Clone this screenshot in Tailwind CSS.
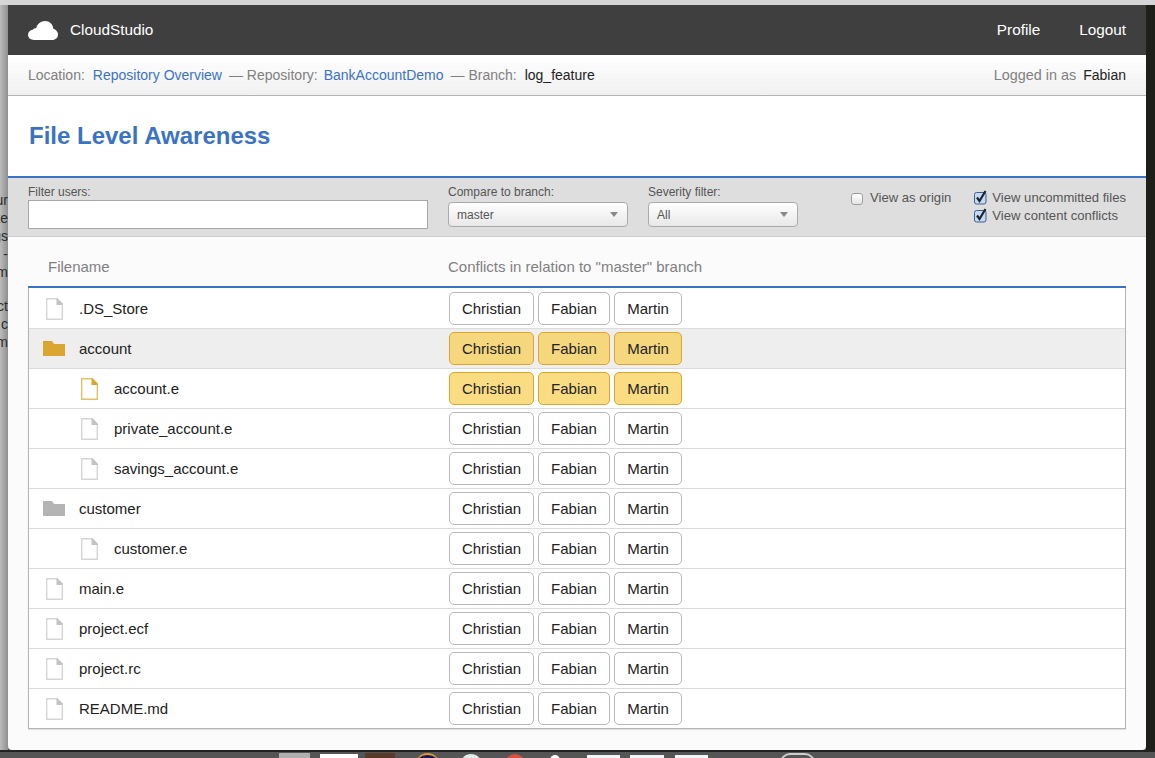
<!DOCTYPE html>
<html lang="en">
  <head>
    <meta charset="UTF-8" />
    <title>CloudStudio - File Level Awareness</title>
    <script src="https://cdn.jsdelivr.net/npm/@tailwindcss/browser@4"></script>
  </head>
  <body class="w-[1155px] h-[758px] overflow-hidden bg-[#55554f] font-['Liberation_Sans',Arial,sans-serif] text-[14px]">
    <!-- Desktop behind the window -->
    <div class="h-[5px] bg-[#d6d6d6]"></div>
    <div class="flex h-[745px]">
      <div class="w-[8px] overflow-hidden flex flex-col items-end pt-[186px] bg-gradient-to-r from-[#bcbcbc] to-[#8f8f8f] text-[#2c2c2c] leading-[18px] whitespace-nowrap">
        <span class="h-[18px]">ur</span>
        <span class="h-[18px]">te</span>
        <span class="h-[18px]">gs</span>
        <span class="h-[18px]">-</span>
        <span class="h-[18px]">m</span>
        <span class="h-[16px]"></span>
        <span class="h-[18px]">ct</span>
        <span class="h-[18px]">c</span>
        <span class="h-[18px]">m</span>
      </div>

      <!-- Window -->
      <div class="w-[1138px] flex flex-col bg-[#fbfbfb] rounded-b-[4px] overflow-hidden">
        <header class="h-[50px] shrink-0 bg-[#3f3f3f] flex items-center justify-between px-[20px] text-white text-[15.3px]">
          <div class="flex items-center">
            <svg width="30" height="19" viewBox="0 0 30 19" class="mr-[12px]">
              <path fill="#fff" d="M6 19C2.600 19 0 16.800 0 13.800 0 11.200 2 9.200 4.700 8.800 5.400 7.600 6.700 7 8 7.200 9.400 3 12.800 0 17 0c4.600 0 8 3.300 8.300 7.700 2.800.8 4.700 3 4.700 5.800C30 16.700 27.500 19 24.300 19Z" />
            </svg>
            <span>CloudStudio</span>
          </div>
          <nav class="flex gap-[39px]">
            <a>Profile</a>
            <a>Logout</a>
          </nav>
        </header>

        <div class="h-[41px] shrink-0 border-b border-[#b4b4b4] bg-gradient-to-b from-white to-[#f0f0f0] flex items-center justify-between px-[20px] text-[#808080]">
          <div class="flex">
            <span>Location:</span>
            <a class="ml-[8px] text-[#3b73c4]">Repository Overview</a>
            <span class="ml-[7px]">— Repository:</span>
            <a class="ml-[6px] text-[#3b73c4]">BankAccountDemo</a>
            <span class="ml-[7px]">— Branch:</span>
            <span class="ml-[8px] text-[#222]">log_feature</span>
          </div>
          <div class="flex items-baseline mt-[1px]">
            <span class="text-[14.4px]">Logged in as</span>
            <span class="ml-[7px] text-[#222]">Fabian</span>
          </div>
        </div>

        <div class="h-[80px] shrink-0 bg-white flex items-center pl-[21px]">
          <h1 class="text-[24px] font-bold text-[#3b73c4]">File Level Awareness</h1>
        </div>

        <!-- Filters -->
        <div class="h-[61px] shrink-0 border-t-2 border-b border-t-[#3b73c4] border-b-[#cfcfcf] bg-[#dedede] flex px-[20px] text-[12px] text-[#555]">
          <div class="w-[400px] mt-[6px]">
            <label class="block leading-[16px]">Filter users:</label>
            <input type="text" class="block w-[400px] h-[29px] bg-white border border-[#a8a8a8]" />
          </div>
          <div class="w-[180px] ml-[20px] mt-[6px]">
            <label class="block leading-[16px]">Compare to branch:</label>
            <div class="flex items-center justify-between h-[25px] mt-[2px] pl-[8px] pr-[9px] rounded-[4px] border border-[#aaa] bg-gradient-to-b from-white to-[#e8e8e8]">
              <span>master</span>
              <span class="w-0 h-0 border-x-[4px] border-x-transparent border-t-[5px] border-t-[#888]"></span>
            </div>
          </div>
          <div class="w-[150px] ml-[20px] mt-[6px]">
            <label class="block leading-[16px]">Severity filter:</label>
            <div class="flex items-center justify-between h-[25px] mt-[2px] pl-[8px] pr-[9px] rounded-[4px] border border-[#aaa] bg-gradient-to-b from-white to-[#e8e8e8]">
              <span>All</span>
              <span class="w-0 h-0 border-x-[4px] border-x-transparent border-t-[5px] border-t-[#888]"></span>
            </div>
          </div>
          <div class="ml-auto flex mt-[11px] gap-[23px] text-[13.1px]">
            <div class="flex items-start leading-[18px] h-[18px]">
              <span class="w-[12px] h-[12px] mt-[4px] mr-[7px] rounded-[3px] border border-[#a0a0a0] bg-gradient-to-b from-white to-[#e4e4e4]"></span>
              <span>View as origin</span>
            </div>
            <div class="leading-[18px]">
              <div class="flex items-start">
                <svg width="13" height="15" viewBox="0 0 13 15" class="mr-[5px] mt-[1px]">
                  <rect x="0.500" y="2.500" width="11.500" height="11.500" rx="2" fill="#c6d9f2" stroke="#3c5f90" />
                  <path d="M3 7.500 5.500 11 11.500 1" fill="none" stroke="#1c2430" stroke-width="2.200" />
                </svg>
                <span>View uncommitted files</span>
              </div>
              <div class="flex items-start">
                <svg width="13" height="15" viewBox="0 0 13 15" class="mr-[5px] mt-[1px]">
                  <rect x="0.500" y="2.500" width="11.500" height="11.500" rx="2" fill="#c6d9f2" stroke="#3c5f90" />
                  <path d="M3 7.500 5.500 11 11.500 1" fill="none" stroke="#1c2430" stroke-width="2.200" />
                </svg>
                <span>View content conflicts</span>
              </div>
            </div>
          </div>
        </div>

        <!-- File table -->
        <div class="px-[20px]">
          <div class="flex h-[51px] pt-[21px] leading-[18px] text-[15px] text-[#808080] border-b-2 border-[#3b73c4]">
            <div class="w-[420px] pl-[20px]">Filename</div>
            <div>Conflicts in relation to "master" branch</div>
          </div>
          <div id="rows" class="pt-[1px] bg-white border-x border-b border-[#b4b4b4] shadow-[0_1px_1px_rgba(0,0,0,0.1)] text-[15px] text-[#222]"></div>
        </div>
      </div>

      <div class="w-[9px] bg-[#1f1f1a]"></div>
    </div>

    <!-- Dock peeking out under the window -->
    <div class="h-[8px] overflow-hidden border-t-2 border-[#222] bg-[#555] flex pl-[279px]">
      <span class="mt-[1px] w-[31px] h-[6px] bg-[#b0b0b0]"></span>
      <span class="mt-[2px] ml-[10px] w-[38px] h-[6px] bg-white"></span>
      <span class="mt-[1px] ml-[7px] w-[30px] h-[6px] bg-[#5a3a28]"></span>
      <span class="mt-[1px] ml-[20px] w-[25px] h-[25px] rounded-full bg-[#1e1a5a] border-t-2 border-[#d99a30]"></span>
      <span class="mt-[2px] ml-[20px] w-[22px] h-[22px] rounded-full bg-[#dfeeea]"></span>
      <span class="mt-[2px] ml-[23px] w-[20px] h-[20px] rounded-full bg-[#d9503f]"></span>
      <span class="mt-[3px] ml-[25px] w-[10px] h-[10px] rounded-full bg-white"></span>
      <span class="mt-[3px] ml-[27px] w-[33px] h-[6px] bg-[#f2f6fa]"></span>
      <span class="mt-[3px] ml-[10px] w-[34px] h-[6px] bg-[#f2f6fa]"></span>
      <span class="mt-[3px] ml-[11px] w-[33px] h-[6px] bg-[#f2f6fa]"></span>
      <span class="mt-[1px] ml-[72px] w-[35px] h-[20px] rounded-full border-2 border-[#ccc]"></span>
    </div>

    <script>
      const files = [
        { name: ".DS_Store", type: "file" },
        { name: "account", type: "folder", conflict: true },
        { name: "account.e", type: "file", nested: true, conflict: true },
        { name: "private_account.e", type: "file", nested: true },
        { name: "savings_account.e", type: "file", nested: true },
        { name: "customer", type: "folder" },
        { name: "customer.e", type: "file", nested: true },
        { name: "main.e", type: "file" },
        { name: "project.ecf", type: "file" },
        { name: "project.rc", type: "file" },
        { name: "README.md", type: "file" },
      ];

      function fileIcon(conflict) {
        const line = conflict ? "#eabf62" : "#d6d6d6";
        const fold = conflict ? "#dba62f" : "#c4c4c4";
        return `<svg width="17" height="22" viewBox="0 0 17 22"><path d="M.7.7H11L16.3 6V21.3H.7Z" fill="#fff" stroke="${line}" stroke-width="1.4" /><path d="M10.5 0H11L17 6V7H10.5Z" fill="${fold}" /></svg>`;
      }

      function folderIcon(conflict) {
        const fill = conflict ? "#dba62f" : "#b4b4b4";
        return `<svg width="22" height="15" viewBox="0 0 22 15"><path d="M0 0H9L11 3H22V15H0Z" fill="${fill}" /></svg>`;
      }

      function userButton(name, width, file) {
        const color = !file.conflict
          ? "border-[#b8b8b8] bg-white"
          : file.type === "folder"
            ? "border-[#dda530] bg-[#f5d77e]"
            : "border-[#dda530] bg-[#fadc82]";
        return `<span class="flex items-center justify-center h-[33px] pt-[1px] ${width} rounded-[5px] border ${color}">${name}</span>`;
      }

      document.getElementById("rows").innerHTML = files
        .map((file, i) => {
          const last = i === files.length - 1;
          const rowClass = last ? "h-[39px]" : "h-[40px] border-b border-[#dcdcdc]";
          const bg = file.type === "folder" && file.conflict ? "bg-[#eeeeee]" : "";
          const iconCell = file.type === "folder"
            ? `<div class="w-[50px] pl-[14px]">${folderIcon(file.conflict)}</div>`
            : file.nested
              ? `<div class="w-[85px] pl-[52px]">${fileIcon(file.conflict)}</div>`
              : `<div class="w-[50px] pl-[17px]">${fileIcon(file.conflict)}</div>`;
          const nameWidth = file.nested ? "w-[335px]" : "w-[370px]";
          return `<div class="flex items-center ${rowClass} ${bg}">
            ${iconCell}
            <div class="${nameWidth} pt-[1px]">${file.name}</div>
            <div class="flex gap-[4px]">
              ${userButton("Christian", "w-[85px]", file)}
              ${userButton("Fabian", "w-[72px]", file)}
              ${userButton("Martin", "w-[68px]", file)}
            </div>
          </div>`;
        })
        .join("");
    </script>
  </body>
</html>
